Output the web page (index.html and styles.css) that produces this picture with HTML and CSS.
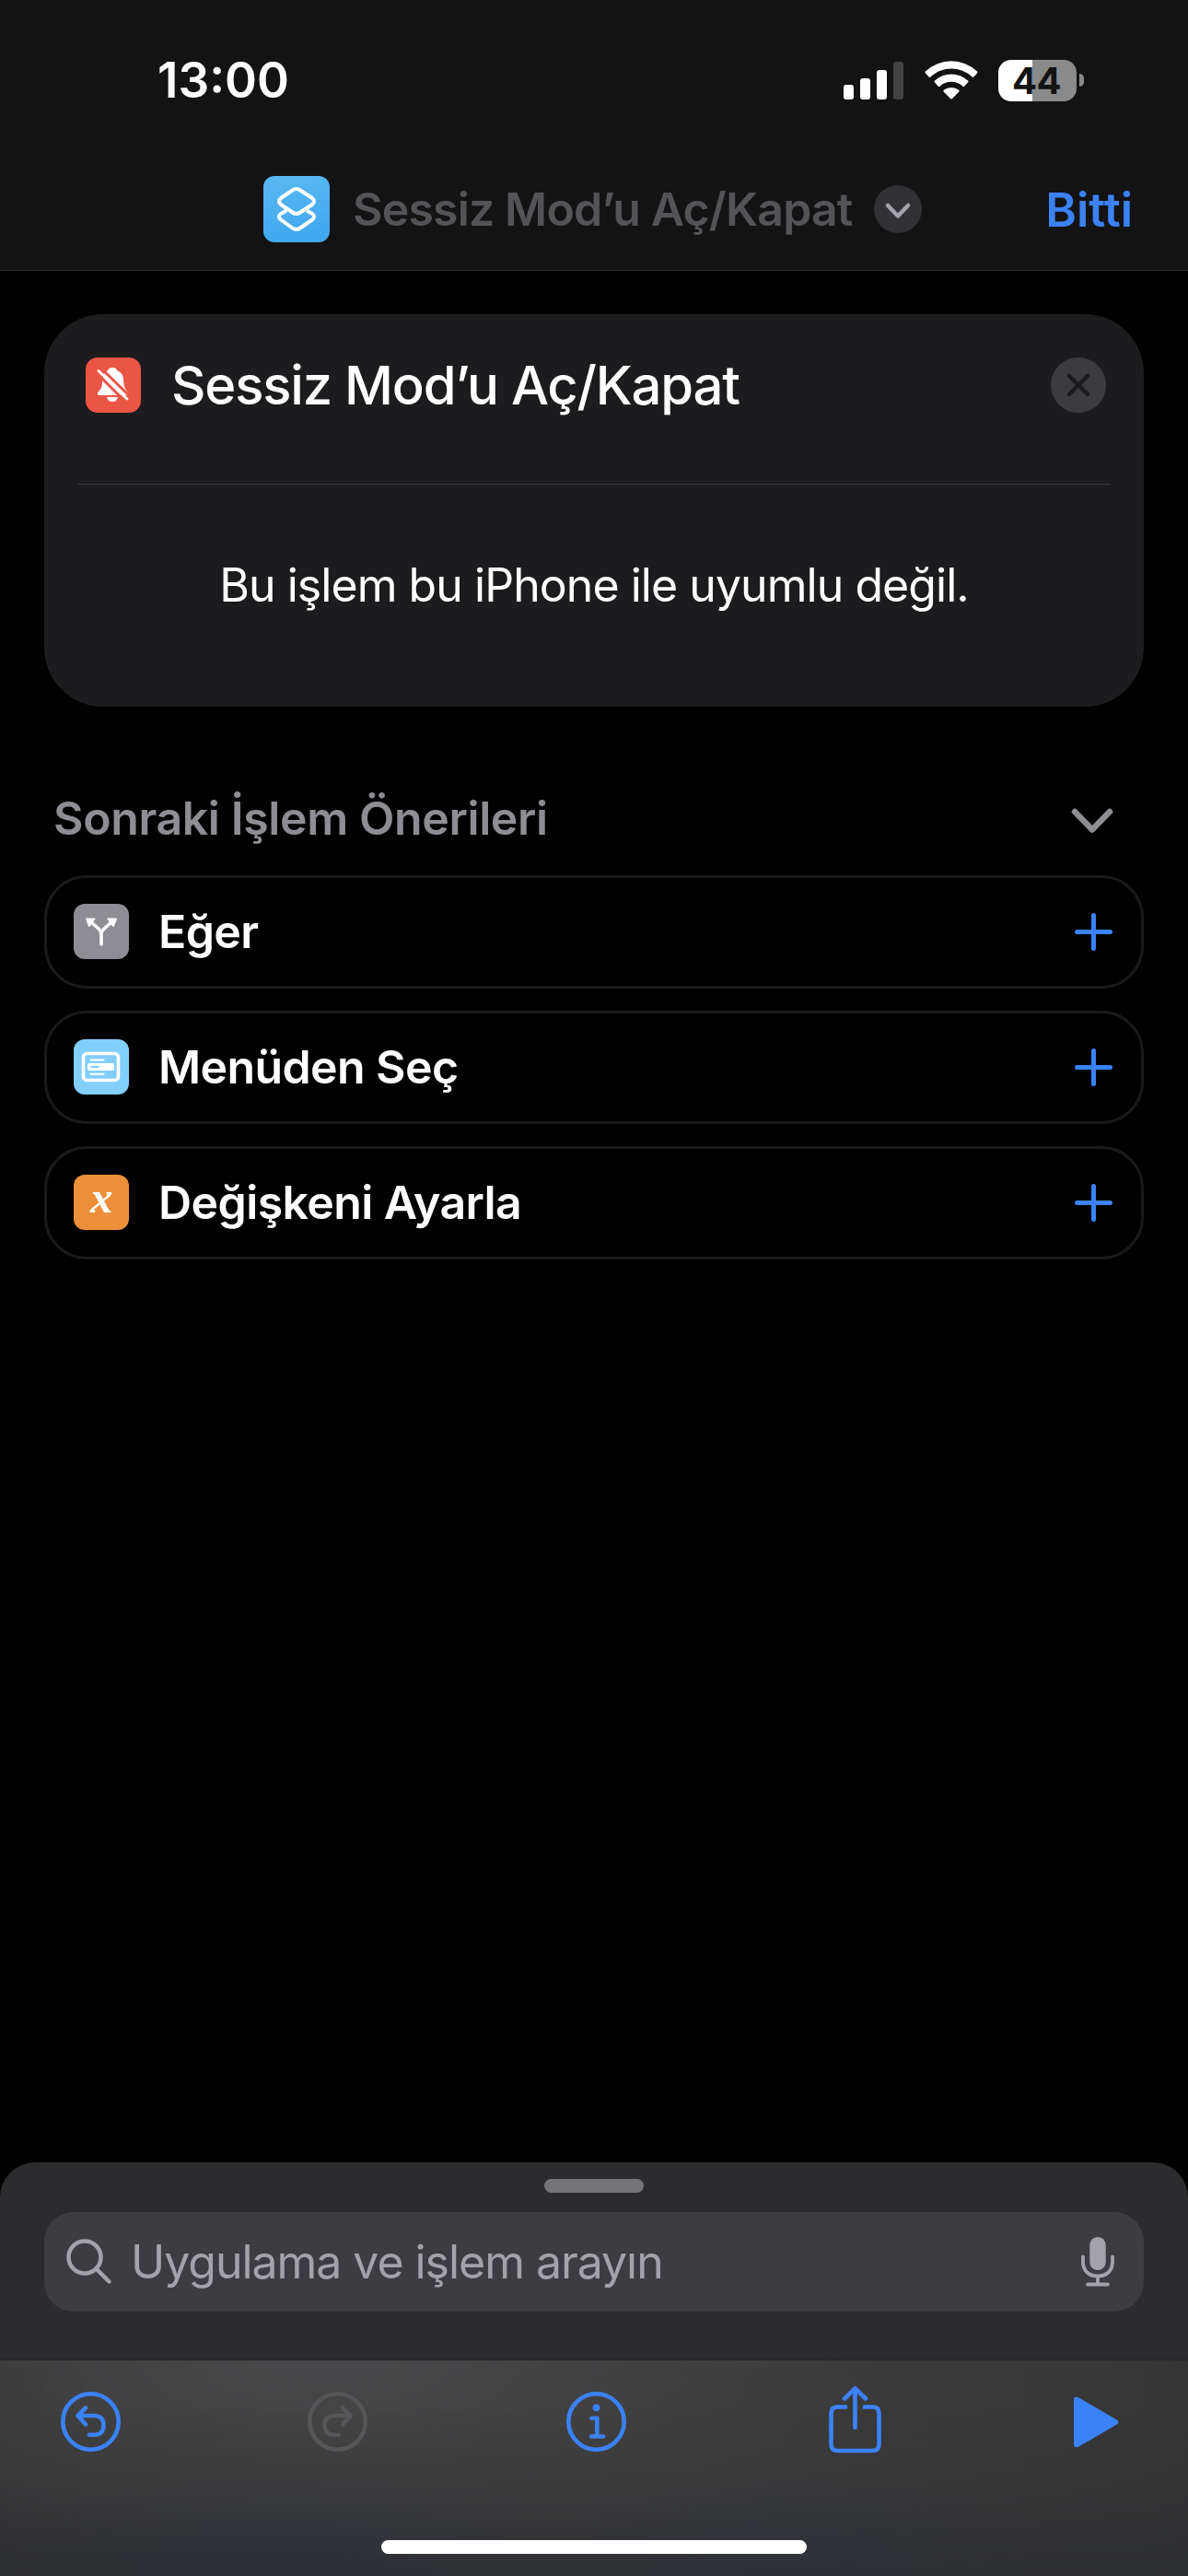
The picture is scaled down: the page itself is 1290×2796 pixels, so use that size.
FILE: index.html
```html
<!DOCTYPE html>
<html lang="tr">
  <head>
    <meta charset="UTF-8" />
    <meta name="viewport" content="width=device-width, initial-scale=1.0" />
    <title>Sessiz Mod’u Aç/Kapat</title>
    <link rel="stylesheet" href="styles.css">
  </head>
  <body>
    <header class="top">
      <div class="status-bar">
        <span class="time">13:00</span>
        <div class="status-icons">
          <svg class="signal" width="65" height="41" viewBox="0 0 65 41" fill="#fff">
            <rect x="0" y="25" width="11" height="16" rx="3" />
            <rect x="18" y="18" width="11" height="23" rx="3" />
            <rect x="36" y="9" width="11" height="32" rx="3" />
            <rect x="54" y="0" width="11" height="41" rx="3" fill="#434343" />
          </svg>
          <svg class="wifi" width="58" height="42" viewBox="0 0 58 42" fill="#fff">
            <path d="M1 11.4 Q0 12.5 1 13.6 L4.4 17.3 Q5.5 18.3 6.6 17.3 A33 33 0 0 1 51.4 17.3 Q52.5 18.3 53.6 17.3 L57 13.6 Q58 12.5 57 11.4 A41 41 0 0 0 1 11.4 Z" />
            <path d="M11 21.6 Q10 22.6 11 23.6 L14.6 27.4 Q15.7 28.4 16.8 27.4 A18.5 18.5 0 0 1 41.2 27.4 Q42.3 28.4 43.4 27.4 L47 23.6 Q48 22.6 47 21.6 A26.5 26.5 0 0 0 11 21.6 Z" />
            <path d="M20.8 31.8 Q19.8 32.8 20.8 33.8 L28 41 Q29 42 30 41 L37.2 33.8 Q38.2 32.8 37.2 31.8 A13 13 0 0 0 20.8 31.8 Z" />
          </svg>
          <div class="battery"><span>44</span></div>
          <div class="battery-tip"></div>
        </div>
      </div>
      <nav class="nav">
        <svg class="app-icon" width="72" height="72" viewBox="0 0 72 72" fill="none">
          <defs>
            <linearGradient id="appBlue" x1="0" y1="0" x2="0.2" y2="1">
              <stop offset="0" stop-color="#5ab9f3" />
              <stop offset="1" stop-color="#41a8ee" />
            </linearGradient>
          </defs>
          <rect width="72" height="72" rx="12" fill="url(#appBlue)" />
          <g stroke="#fff" stroke-width="4" stroke-linejoin="round">
            <path d="M25 37.5 L19 41 Q15 44 19 47.5 L31.5 56.5 Q35.700 59.500 40 56.500 L53 47.500 Q57 44 53 41 L47 37.500" />
            <path d="M31.500 15.500 Q35.700 12.500 40 15.500 L53 24 Q57 27.500 53 31 L40 39.500 Q35.700 42.500 31.500 39.500 L19 31 Q15 27.500 19 24 Z" />
          </g>
        </svg>
        <span class="nav-title">Sessiz Mod’u Aç/Kapat</span>
        <svg class="nav-more" width="52" height="52" viewBox="0 0 52 52" fill="none">
          <circle cx="26" cy="26" r="26" fill="#323136" />
          <path d="M15 22 L26 33.500 L37 22" stroke="#a4a3aa" stroke-width="4.500" stroke-linecap="round" stroke-linejoin="round" />
        </svg>
        <a class="done">Bitti</a>
      </nav>
    </header>

    <main>
      <section class="card">
        <div class="card-header">
          <svg width="60" height="60" viewBox="0 0 60 60" fill="#fff">
            <rect width="60" height="60" rx="13" fill="#eb5545" />
            <path d="M29 11 Q33.500 11 34.500 14.500 Q40.500 16.500 41 24 Q41.300 31 43 34 L46 38.500 Q46.500 41 44 41 L14.500 41 Q11.800 40.500 13.500 37.500 Q17.500 34 18 29 Q17.500 17 23.500 14.500 Q25 11 29 11 Z" />
            <path d="M23 43 H35 Q34 48 29 48 Q24 48 23 43 Z" />
            <path d="M14 9 L50 44" stroke="#eb5545" stroke-width="3" />
            <path d="M11 16 L43 48" stroke="#eb5545" stroke-width="3" />
            <path d="M14 14.500 L45 45" stroke="#fff" stroke-width="2.800" stroke-linecap="round" />
          </svg>
          <h1>Sessiz Mod’u Aç/Kapat</h1>
          <svg class="close" width="60" height="60" viewBox="0 0 60 60">
            <circle cx="30" cy="30" r="30" fill="#3c3b40" />
            <path d="M20 20 L40 40 M40 20 L20 40" stroke="#1c1c1e" stroke-width="4.500" stroke-linecap="round" />
          </svg>
        </div>
        <p class="card-message">Bu işlem bu iPhone ile uyumlu değil.</p>
      </section>

      <section class="suggestions">
        <div class="suggestions-header">
          <h2>Sonraki İşlem Önerileri</h2>
          <svg class="collapse" width="46" height="28" viewBox="0 0 46 28" fill="none">
            <path d="M4 4 L23 23.500 L42 4" stroke="#8e8d93" stroke-width="6.500" stroke-linecap="round" stroke-linejoin="round" />
          </svg>
        </div>
        <ul class="rows">
          <li class="row">
            <svg width="60" height="60" viewBox="0 0 60 60" fill="none">
              <rect width="60" height="60" rx="12" fill="#8e8d93" />
              <path d="M30 44 V33 Q30 30 27 27 L18.500 19.500 M30 33 Q30 30 33 27 L41.500 19.500" stroke="#fff" stroke-width="3.600" stroke-linecap="round" />
              <path d="M14 16.500 L22.500 16.500 L17 24 Z M46 16.500 L37.500 16.500 L43 24 Z" fill="#fff" stroke="#fff" stroke-width="2" stroke-linejoin="round" />
            </svg>
            <span>Eğer</span>
            <svg class="plus" width="41" height="41" viewBox="0 0 41 41"><path d="M20.500 2.500 V38.500 M2.500 20.500 H38.500" /></svg>
          </li>
          <li class="row">
            <svg width="60" height="60" viewBox="0 0 60 60" fill="none">
              <rect width="60" height="60" rx="12" fill="#83cffc" />
              <rect x="10.500" y="15.500" width="38" height="29" rx="4" stroke="#fff" stroke-width="3.600" />
              <rect x="15" y="26" width="29" height="8" rx="1.800" fill="#fff" />
              <path d="M18.500 22.500 H32.500 M18.500 37.800 H32.500" stroke="#fff" stroke-width="2" stroke-linecap="round" />
              <path d="M19 30 H27" stroke="#83cffc" stroke-width="1.900" stroke-linecap="round" />
            </svg>
            <span>Menüden Seç</span>
            <svg class="plus" width="41" height="41" viewBox="0 0 41 41"><path d="M20.500 2.500 V38.500 M2.500 20.500 H38.500" /></svg>
          </li>
          <li class="row">
            <div class="variable-icon">x</div>
            <span>Değişkeni Ayarla</span>
            <svg class="plus" width="41" height="41" viewBox="0 0 41 41"><path d="M20.500 2.500 V38.500 M2.500 20.500 H38.500" /></svg>
          </li>
        </ul>
      </section>
    </main>

    <footer class="sheet">
      <div class="grabber"></div>
      <div class="search">
        <svg width="50" height="50" viewBox="0 0 50 50" fill="none" stroke="#a3a2aa" stroke-width="4.500" stroke-linecap="round">
          <circle cx="20" cy="20" r="17.500" />
          <path d="M33 33 L46.500 46.500" />
        </svg>
        <span>Uygulama ve işlem arayın</span>
        <svg class="mic" width="36" height="54" viewBox="0 0 36 54" fill="none" stroke="#a3a2aa" stroke-width="3.800" stroke-linecap="round">
          <rect x="9.300" y="0" width="17.400" height="36" rx="8.700" fill="#a3a2aa" stroke="none" />
          <path d="M2 21.500 V27 C2 37 8.500 42.500 18 42.500 C27.500 42.500 34 37 34 27 V21.500 M18 42.500 V51.500 M7 51.500 H29" />
        </svg>
      </div>
      <div class="bottom">
        <div class="toolbar">
          <svg width="65" height="65" viewBox="0 0 65 65">
            <circle cx="32.500" cy="32.500" r="30.200" />
            <path d="M27 17.500 L18.500 26 L27 35.500 M19 26 H36 C43 26 46.500 30 46.500 36 C46.500 43 43 46.800 37 46.800 H31" />
          </svg>
          <svg class="disabled" width="65" height="65" viewBox="0 0 65 65">
            <circle cx="32.500" cy="32.500" r="30.200" />
            <path d="M38 17.500 L46.500 26 L38 35.500 M46 26 H29 C22 26 18.500 30 18.500 36 C18.500 43 22 46.800 28 46.800 H34" />
          </svg>
          <svg width="65" height="65" viewBox="0 0 65 65">
            <circle cx="32.500" cy="32.500" r="30.200" />
            <circle class="solid" cx="32.500" cy="17.300" r="3.900" />
            <path d="M27.500 28.800 H33.300 V48.500 M27 48.500 H40" />
          </svg>
          <svg class="share" width="57" height="73" viewBox="0 0 57 73">
            <path d="M20 22.500 H9.500 Q2.500 22.500 2.500 29.500 V63 Q2.500 70 9.500 70 H47.500 Q54.500 70 54.500 63 V29.500 Q54.500 22.500 47.500 22.500 H37" stroke-linecap="butt" />
            <path d="M28.500 45 V2.500 M17 13.500 L28.500 2.300 L40 13.500" />
          </svg>
          <svg class="play" width="49" height="56" viewBox="0 0 49 56">
            <path class="solid" d="M0 4 Q0 -1.500 5.500 1.500 L46 25 Q51 28 46 31 L5.500 54.500 Q0 57 0 52 Z" />
          </svg>
        </div>
        <div class="home-indicator"></div>
      </div>
    </footer>
  </body>
</html>
```
FILE: styles.css
```css
* {
    box-sizing: border-box;
}

body {
    display: flex;
    flex-direction: column;
    height: 2796px;
    margin: 0;
    background-color: #000;
    color: #fff;
    font-family: Inter, "Liberation Sans", sans-serif;
    font-size: 50px;
}

h1, h2, p, ul {
    margin: 0;
    padding: 0;
}

svg {
    display: block;
    flex-shrink: 0;
}

/* Status bar and navigation */
.top {
    background-color: #131313;
    border-bottom: 1px solid #2a2a2b;
}

.status-bar {
    display: flex;
    align-items: center;
    justify-content: space-between;
    height: 174px;
    padding: 0 113px 0 171px;
}

.time {
    font-size: 53px;
    font-weight: 600;
}

.status-icons {
    display: flex;
    align-items: center;
}

.wifi {
    margin: 0 22px 0 23px;
}

.battery {
    display: flex;
    align-items: center;
    justify-content: center;
    width: 85px;
    height: 45px;
    padding-right: 2px;
    border-radius: 14px;
    background: linear-gradient(90deg, #fff 37px, #8a8a8a 37px);
    color: #131313;
    font-size: 40px;
    font-weight: 700;
    letter-spacing: -0.5px;
}

.battery-tip {
    width: 5px;
    height: 14px;
    margin-left: 3px;
    border-radius: 0 5px 5px 0;
    background-color: #8a8a8a;
}

.nav {
    display: flex;
    align-items: center;
    height: 119px;
    padding: 0 60px 13px 286px;
}

.nav-title {
    margin-left: 25px;
    color: #545358;
    font-weight: 600;
    letter-spacing: -0.84px;
}

.nav-more {
    margin-left: 23px;
}

.done {
    margin-left: auto;
    color: #3b82f7;
    font-size: 51px;
    font-weight: 600;
}

main {
    padding: 47px 48px 0;
}

/* Action card */
.card {
    height: 426px;
    border-radius: 64px;
    background-color: #1c1c1e;
}

.card-header {
    display: flex;
    align-items: center;
    height: 185px;
    margin: 0 36px;
    padding: 47px 5px 77px 9px;
    border-bottom: 1px solid #3a3a3c;
}

.card-header h1 {
    margin-left: 33px;
    font-size: 58px;
    font-weight: 500;
    letter-spacing: -1.2px;
}

.close {
    margin-left: auto;
}

.card-message {
    display: flex;
    align-items: center;
    justify-content: center;
    height: 241px;
    padding-bottom: 23px;
    letter-spacing: -0.95px;
}

/* Next action suggestions */
.suggestions-header {
    display: flex;
    align-items: center;
    justify-content: space-between;
    height: 183px;
    padding: 59px 33px 0 10px;
}

.suggestions-header h2 {
    color: #8e8d93;
    font-size: 50px;
    font-weight: 600;
    letter-spacing: -0.38px;
}

.collapse {
    margin-top: 5px;
}

.rows {
    display: flex;
    flex-direction: column;
    gap: 24px;
    list-style: none;
}

.row {
    display: flex;
    align-items: center;
    height: 123px;
    padding: 0 31px 1px 29px;
    border: 3px solid #1a1a1b;
    border-radius: 46px;
    font-weight: 600;
    letter-spacing: -0.6px;
}

.row span {
    margin-left: 32px;
}

.variable-icon {
    width: 60px;
    height: 60px;
    border-radius: 12px;
    background-color: #ec8f38;
    font-family: "Liberation Serif", serif;
    font-size: 49px;
    font-style: italic;
    font-weight: 700;
    line-height: 49px;
    text-align: center;
}

.plus {
    margin-left: auto;
    stroke: #3b82f7;
    stroke-width: 5;
    stroke-linecap: round;
}

/* Bottom sheet */
.sheet {
    height: 449px;
    margin-top: auto;
    padding-top: 18px;
    border-radius: 38px 38px 0 0;
    background-color: #2c2c2e;
}

.grabber {
    width: 108px;
    height: 15px;
    margin: 0 auto 21px;
    border-radius: 8px;
    background-color: #757479;
}

.search {
    display: flex;
    align-items: center;
    height: 108px;
    margin: 0 48px;
    padding: 0 32px 0 24px;
    border-radius: 32px;
    background-color: #3d3c41;
    color: #a3a2aa;
    letter-spacing: -1.04px;
}

.search span {
    margin-left: 20px;
}

.mic {
    margin-left: auto;
}

.bottom {
    height: 235px;
    margin-top: 52px;
    border-top: 1px solid #262628;
    background:
        radial-gradient(ellipse 330px 120px at 24% 105%, rgba(45, 53, 72, 0.6), transparent),
        radial-gradient(ellipse 300px 120px at 66% 105%, rgba(45, 53, 72, 0.55), transparent),
        radial-gradient(ellipse 640px 220px at 27% 0%, #48484a, transparent),
        linear-gradient(90deg, #373738, #3b3b3c 60%, #363637);
    background-color: #363637;
    box-shadow: inset 0 -130px 90px -60px rgba(44, 45, 48, 0.6);
}

.toolbar {
    display: grid;
    grid-template-columns: 268px 281px 285px 266px auto;
    align-items: center;
    height: 195px;
    padding: 0 0 62px 66px;
}

.toolbar svg {
    fill: none;
    stroke: #3b82f7;
    stroke-width: 4.6;
    stroke-linecap: round;
    stroke-linejoin: round;
}

.toolbar .solid {
    fill: #3b82f7;
    stroke: none;
}

.toolbar .disabled {
    stroke: #565658;
}

.toolbar .share {
    margin-bottom: 4px;
}

.home-indicator {
    width: 462px;
    height: 15px;
    margin: 0 auto;
    border-radius: 8px;
    background-color: #fff;
}
```
